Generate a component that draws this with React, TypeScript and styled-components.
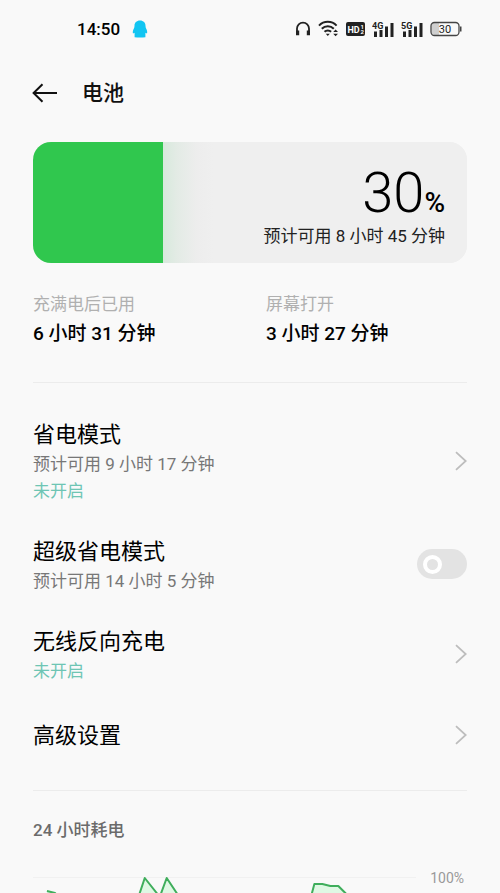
import React, { useState } from "react";
import styled, { createGlobalStyle } from "styled-components";

const GlobalStyle = createGlobalStyle`
  *, *::before, *::after { box-sizing: border-box; }
  body {
    margin: 0;
    background: #f9f9f9;
    color: #000;
    font-family: Roboto, "Noto Sans CJK SC", sans-serif;
  }
`;

const Page = styled.div`
  min-height: 100vh;
  overflow: hidden;
  background: #f9f9f9;
`;

const StatusBar = styled.div`
  display: flex;
  align-items: center;
  justify-content: space-between;
  height: 58px;
  padding: 0 38px 0 77px;
`;

const StatusGroup = styled.div<{ $gap: number }>`
  display: flex;
  align-items: center;
  gap: ${(p) => p.$gap}px;
`;

const Clock = styled.time`
  font-size: 17px;
  line-height: 20px;
  font-weight: 500;
`;

const Header = styled.header`
  display: flex;
  align-items: center;
  gap: 24px;
  height: 70px;
  padding: 0 32px;
`;

const IconButton = styled.button`
  display: flex;
  padding: 0;
  border: 0;
  background: none;
  color: #111;
  cursor: pointer;
`;

const PageTitle = styled.h1`
  margin: 0;
  font-size: 21px;
  line-height: 32px;
  font-weight: 500;
  color: #111;
`;

const Main = styled.main`
  padding: 14px 33px 0;
`;

const BatteryCard = styled.section`
  display: flex;
  min-height: 121px;
  border-radius: 18px;
  overflow: hidden;
  background: #efefef;
`;

const BatteryLevel = styled.div`
  flex: none;
  background: #30c74e;
`;

const BatteryInfo = styled.div`
  flex: 1;
  display: flex;
  flex-direction: column;
  align-items: flex-end;
  gap: 4px;
  padding: 25px 22px 13px 0;
  background: linear-gradient(to right, #d7e9dc 0, #e3ebe5 14px, #ededed 34px, #efefef 50px);
`;

const Percentage = styled.div`
  display: flex;
  align-items: baseline;
  height: 52px;
  font-size: 56px;
  line-height: 52px;
  font-weight: 300;
`;

const PercentSign = styled.span`
  font-size: 28px;
  line-height: 28px;
  font-weight: 500;
`;

const Estimate = styled.div`
  font-size: 17px;
  line-height: 27px;
  color: #222;
`;

const Stats = styled.dl`
  display: grid;
  grid-template-columns: 233px 1fr;
  margin: 0;
  padding: 27px 0 32px;
  border-bottom: 1px solid #ececec;
`;

const StatLabel = styled.dt`
  font-size: 17px;
  line-height: 28px;
  color: #b0b0b0;
`;

const StatValue = styled.dd`
  margin: 0;
  font-size: 19px;
  line-height: 32px;
  font-weight: 500;
`;

const Settings = styled.div`
  display: flex;
  flex-direction: column;
  gap: 31px;
  padding: 36px 0 34px;
  border-bottom: 1px solid #ececec;
`;

const rowStyle = `
  display: flex;
  align-items: center;
  justify-content: space-between;
  color: inherit;
  text-decoration: none;
  cursor: pointer;
`;

const LinkRow = styled.a<{ $single?: boolean }>`
  ${rowStyle}
  padding: ${(p) => (p.$single ? "4px 0" : "0")};
`;

const ToggleRow = styled.label`
  ${rowStyle}
`;

const RowText = styled.span`
  display: flex;
  flex-direction: column;
`;

const RowTitle = styled.span`
  font-size: 22px;
  line-height: 32px;
`;

const RowDetail = styled.span<{ $accent?: boolean }>`
  font-size: 17px;
  line-height: 27px;
  color: ${(p) => (p.$accent ? "#6ec5b4" : "#777")};
`;

const RowSide = styled.span`
  display: flex;
  padding-bottom: 3px;
`;

const Switch = styled.input`
  appearance: none;
  display: flex;
  align-items: center;
  width: 50px;
  height: 30px;
  margin: 0;
  padding: 0 6px;
  border-radius: 15px;
  background: #e3e3e3;
  cursor: pointer;

  &::before {
    content: "";
    width: 19px;
    height: 19px;
    border: 4px solid #fff;
    border-radius: 50%;
  }

  &:checked {
    justify-content: flex-end;
    background: #30c74e;
  }
`;

const UsageTitle = styled.h2`
  margin: 0;
  padding: 25px 0;
  font-size: 17px;
  line-height: 28px;
  font-weight: 500;
  color: #6b6b6b;
`;

const Usage = styled.div`
  display: flex;
  justify-content: space-between;
  gap: 14px;
`;

const Plot = styled.svg`
  flex: 1;
  min-width: 0;
  height: 24px;
`;

const AxisLabel = styled.span`
  padding-right: 3px;
  font-size: 14px;
  line-height: 18px;
  color: #999;
`;

const Chevron = () => (
  <svg width="12" height="20" viewBox="0 0 12 20" fill="none" stroke="#bdbdbd" strokeWidth="1.8">
    <path d="M1 1.2 L10.7 10 L1 18.8" />
  </svg>
);

const Penguin = () => (
  <svg width="16" height="18" viewBox="0 0 16 18" fill="#12c5f2">
    <path d="M8 .6C4.500.6 2.500 3 2.500 5.700c0 1.200-.2 1.900-.6 2.800C.9 10.200.6 11.800.9 13.300c.6.2 1.100-.1 1.700-.6v4.500c3 .5 7.800.5 10.800 0v-4.500c.6.5 1.100.8 1.700.6.3-1.500 0-3.100-1-4.800-.4-.9-.6-1.600-.6-2.800C13.500 3 11.500.6 8 .6z" />
  </svg>
);

const Headphones = () => (
  <svg width="16" height="16" viewBox="0 0 16 16" fill="none" stroke="#222" strokeWidth="1.8">
    <path d="M2 12V7.600a6 6 0 0 1 12 0V12" />
    <path d="M2.600 9.500v4.800M13.400 9.500v4.800" strokeWidth="3.200" />
  </svg>
);

const Wifi = () => (
  <svg width="21" height="18" viewBox="0 0 21 18" fill="none" stroke="#222" strokeWidth="2">
    <path d="M1 5.600a12.200 12.200 0 0 1 17.600 0" />
    <path d="M3.800 8.800a8.300 8.300 0 0 1 12 0" />
    <path d="M6.500 11.800a4.600 4.600 0 0 1 6.600 0" />
    <path d="M7.800 13.800h4L9.800 16z M15.200 12l2.400-2.400L20 12z M15.200 13.800l2.400 2.400 2.400-2.400z" fill="#222" stroke="none" />
  </svg>
);

const HdBadge = () => (
  <svg width="19" height="14" viewBox="0 0 19 14">
    <rect width="19" height="14" rx="2" fill="#222" />
    <g fill="#fff" fontFamily="Roboto, sans-serif" fontWeight="700">
      <text x="1.500" y="10.500" fontSize="9">HD</text>
      <text x="14.500" y="6.500" fontSize="6">1</text>
      <text x="14.500" y="12" fontSize="6">2</text>
    </g>
  </svg>
);

const Signal = ({ label }: { label: string }) => (
  <svg width="22" height="17" viewBox="0 0 22 17" fill="#222">
    <text x="0" y="7.500" fontSize="9" fontWeight="700" fontFamily="Roboto, sans-serif">{label}</text>
    <path d="M2 10.500h3V16H2zM7.500 9h3v7h-3zM13 5.500h3V16h-3zM18.500 2h3v14h-3z" />
  </svg>
);

const BatteryIcon = () => (
  <svg width="32" height="16" viewBox="0 0 32 16">
    <path d="M4 2h5v12H4a2.500 2.500 0 0 1-2.500-2.500v-7A2.500 2.500 0 0 1 4 2z" fill="#cfcfcf" />
    <rect x="1" y="1.500" width="28" height="13" rx="3.500" fill="none" stroke="#444" strokeWidth="1.300" />
    <path d="M30 5.500h1.500v5H30z" fill="#444" />
    <text x="15" y="12" fontSize="11" textAnchor="middle" fill="#222" fontFamily="Roboto, sans-serif">30</text>
  </svg>
);

const BackArrow = () => (
  <svg width="26" height="20" viewBox="0 0 26 20" fill="none" stroke="currentColor" strokeWidth="2">
    <path d="M25 10H2M10.500 1.200L1.600 10l8.900 8.800" />
  </svg>
);

const level = 30;

export default function App() {
  const [superSaver, setSuperSaver] = useState(false);

  return (
    <Page>
      <GlobalStyle />
      <StatusBar>
        <StatusGroup $gap={12}>
          <Clock>14:50</Clock>
          <Penguin />
        </StatusGroup>
        <StatusGroup $gap={7}>
          <Headphones />
          <Wifi />
          <HdBadge />
          <Signal label="4G" />
          <Signal label="5G" />
          <BatteryIcon />
        </StatusGroup>
      </StatusBar>

      <Header>
        <IconButton type="button" aria-label="返回">
          <BackArrow />
        </IconButton>
        <PageTitle>电池</PageTitle>
      </Header>

      <Main>
        <BatteryCard>
          <BatteryLevel style={{ width: `${level}%` }} />
          <BatteryInfo>
            <Percentage>
              {level}
              <PercentSign>%</PercentSign>
            </Percentage>
            <Estimate>预计可用 8 小时 45 分钟</Estimate>
          </BatteryInfo>
        </BatteryCard>

        <Stats>
          <div>
            <StatLabel>充满电后已用</StatLabel>
            <StatValue>6 小时 31 分钟</StatValue>
          </div>
          <div>
            <StatLabel>屏幕打开</StatLabel>
            <StatValue>3 小时 27 分钟</StatValue>
          </div>
        </Stats>

        <Settings>
          <LinkRow href="#power-saving">
            <RowText>
              <RowTitle>省电模式</RowTitle>
              <RowDetail>预计可用 9 小时 17 分钟</RowDetail>
              <RowDetail $accent>未开启</RowDetail>
            </RowText>
            <RowSide><Chevron /></RowSide>
          </LinkRow>
          <ToggleRow>
            <RowText>
              <RowTitle>超级省电模式</RowTitle>
              <RowDetail>预计可用 14 小时 5 分钟</RowDetail>
            </RowText>
            <RowSide>
              <Switch
                type="checkbox"
                role="switch"
                checked={superSaver}
                onChange={(e) => setSuperSaver(e.target.checked)}
              />
            </RowSide>
          </ToggleRow>
          <LinkRow href="#reverse-charging">
            <RowText>
              <RowTitle>无线反向充电</RowTitle>
              <RowDetail $accent>未开启</RowDetail>
            </RowText>
            <RowSide><Chevron /></RowSide>
          </LinkRow>
          <LinkRow href="#advanced" $single>
            <RowText>
              <RowTitle>高级设置</RowTitle>
            </RowText>
            <RowSide><Chevron /></RowSide>
          </LinkRow>
        </Settings>

        <UsageTitle>24 小时耗电</UsageTitle>
        <Usage>
          <Plot viewBox="0 0 384 24" preserveAspectRatio="none" aria-label="24 小时耗电">
            <path d="M0 8.500H384" stroke="#f1f1f1" />
            <g fill="#dff8e4" stroke="#3fae5c" strokeWidth="2" strokeLinejoin="round">
              <path d="M14 22l8 2 6 6H14" />
              <path d="M105 30l7-21 12 15 3 4 7-19 10 15 4 6" />
              <path d="M278 30l4-15h8l8 2h8l7 7 6 6" />
            </g>
          </Plot>
          <AxisLabel>100%</AxisLabel>
        </Usage>
      </Main>
    </Page>
  );
}
